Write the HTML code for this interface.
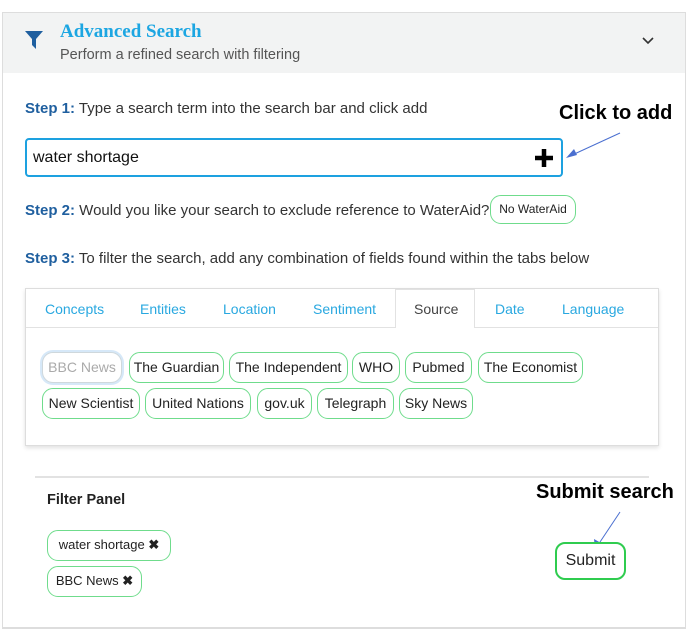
<!DOCTYPE html>
<html><head><meta charset="utf-8"><style>
*{box-sizing:border-box;margin:0;padding:0}
body{width:689px;height:630px;background:#fff;font-family:"Liberation Sans",sans-serif;color:#222;position:relative;overflow:hidden}
.a{position:absolute;white-space:nowrap}
.chip{position:absolute;height:31px;border:1.5px solid #6fdc8c;border-radius:11px;font-size:14px;line-height:28px;text-align:center;color:#222;background:#fff}
.step{font-size:15px;color:#333}
.step b{color:#1f5f9f}
.tab{position:absolute;top:301px;font-size:14px;color:#29a8e0}
</style></head><body>
<div class="a" style="left:2px;top:12px;width:684px;height:617px;border:1px solid #ddd;border-bottom:2px solid #ddd"></div>
<div class="a" style="left:3px;top:13px;width:682px;height:60px;background:#f2f3f3"></div>
<svg class="a" style="left:24px;top:30px" width="20" height="20" viewBox="0 0 20 20"><path d="M1 1H19L12 9V19L8 15V9Z" fill="#1f5f9f"/></svg>
<div class="a" style="left:60px;top:21px;font-family:'Liberation Serif',serif;font-weight:bold;font-size:19px;color:#1ca6e2">Advanced Search</div>
<div class="a" style="left:60px;top:47px;font-size:14.5px;color:#555">Perform a refined search with filtering</div>
<svg class="a" style="left:642px;top:37px" width="12" height="8" viewBox="0 0 12 8"><path d="M1 1L6 6L11 1" stroke="#333" stroke-width="1.6" fill="none"/></svg>

<div class="a step" style="left:25px;top:100px"><b>Step 1:</b> Type a search term into the search bar and click add</div>
<div class="a" style="left:25px;top:138px;width:538px;height:39px;border:2px solid #1da1e0;border-radius:4px"></div>
<div class="a" style="left:33px;top:149px;font-size:16px;color:#111">water shortage</div>
<svg class="a" style="left:534px;top:148px" width="20" height="20" viewBox="0 0 20 20"><path d="M10 1V19M1 10H19" stroke="#000" stroke-width="4.5"/></svg>
<div class="a" style="left:559px;top:102px;font-size:20px;font-weight:bold;color:#000">Click to add</div>
<svg class="a" style="left:0;top:0" width="689" height="630"><path d="M620 133L570 156" stroke="#4a6fd0" stroke-width="1"/><path d="M566 158L574 149L577 155Z" fill="#4a6fd0"/><path d="M620 512L598 545" stroke="#4a6fd0" stroke-width="1"/><path d="M595 549L594 539L601 543Z" fill="#4a6fd0"/></svg>

<div class="a step" style="left:25px;top:202px"><b>Step 2:</b> Would you like your search to exclude reference to WaterAid?</div>
<div class="chip" style="left:490px;top:195px;width:86px;height:29px;font-size:12px;line-height:26px">No WaterAid</div>
<div class="a step" style="left:25px;top:250px"><b>Step 3:</b> To filter the search, add any combination of fields found within the tabs below</div>

<div class="a" style="left:25px;top:288px;width:634px;height:158px;border:1px solid #ddd;box-shadow:0 2px 4px rgba(0,0,0,.12)"></div>
<div class="a" style="left:26px;top:327px;width:632px;height:1px;background:#e2e2e2"></div>
<div class="a" style="left:395px;top:289px;width:80px;height:39px;background:#fff;border:1px solid #e2e2e2;border-bottom:none"></div>
<div class="tab" style="left:45px">Concepts</div>
<div class="tab" style="left:140px">Entities</div>
<div class="tab" style="left:223px">Location</div>
<div class="tab" style="left:313px">Sentiment</div>
<div class="tab" style="left:414px;color:#444">Source</div>
<div class="tab" style="left:495px">Date</div>
<div class="tab" style="left:562px">Language</div>

<div class="chip" style="left:42px;top:352px;width:80px;border-color:#cfd8dc;color:#aaa;box-shadow:0 0 0 2px #d6e8f8">BBC News</div>
<div class="chip" style="left:129px;top:352px;width:95px">The Guardian</div>
<div class="chip" style="left:229px;top:352px;width:119px">The Independent</div>
<div class="chip" style="left:352px;top:352px;width:48px">WHO</div>
<div class="chip" style="left:405px;top:352px;width:67px">Pubmed</div>
<div class="chip" style="left:478px;top:352px;width:105px">The Economist</div>
<div class="chip" style="left:42px;top:388px;width:98px">New Scientist</div>
<div class="chip" style="left:145px;top:388px;width:106px">United Nations</div>
<div class="chip" style="left:257px;top:388px;width:55px">gov.uk</div>
<div class="chip" style="left:317px;top:388px;width:77px">Telegraph</div>
<div class="chip" style="left:399px;top:388px;width:74px">Sky News</div>

<div class="a" style="left:35px;top:476px;width:614px;height:2px;background:#e2e2e2"></div>
<div class="a" style="left:47px;top:492px;font-size:14.5px;font-weight:bold;color:#222">Filter Panel</div>
<div class="a" style="left:536px;top:481px;font-size:20px;font-weight:bold;color:#000">Submit search</div>
<div class="chip" style="left:47px;top:530px;width:124px;font-size:13px">water shortage <b>✖</b></div>
<div class="chip" style="left:47px;top:566px;width:95px;font-size:13px">BBC News <b>✖</b></div>
<div class="chip" style="left:555px;top:542px;width:71px;height:38px;border:2.5px solid #2fcc4f;border-radius:10px;line-height:34px;font-size:16px">Submit</div>
</body></html>
